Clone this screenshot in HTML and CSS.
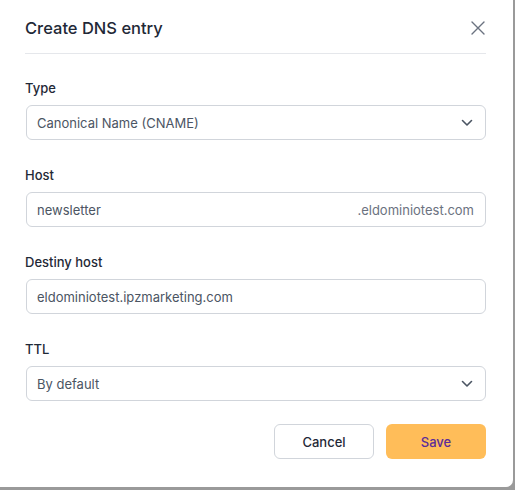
FILE: index.html
```html
<!DOCTYPE html>
<html>
<head>
<meta charset="utf-8">
<link rel="stylesheet" href="styles.css">
</head>
<body>
<div class="modal">
  <div class="header">
    <h2 class="title">Create DNS entry</h2>
    <button class="close" aria-label="Close">
      <svg width="14" height="14" viewBox="0 0 14 14"><path d="M1 1L13 13M13 1L1 13" stroke="#6b7280" stroke-width="1.4" stroke-linecap="round"/></svg>
    </button>
  </div>
  <div class="body">
    <div class="field">
      <label class="label">Type</label>
      <div class="control select">
        <span class="value alt">Canonical Name (CNAME)</span>
        <svg class="chev" width="12" height="8" viewBox="0 0 12 8"><path d="M1.5 1.5L6 6L10.5 1.5" fill="none" stroke="#4b5563" stroke-width="1.6" stroke-linecap="round" stroke-linejoin="round"/></svg>
      </div>
    </div>
    <div class="field">
      <label class="label">Host</label>
      <div class="control">
        <span class="value">newsletter</span>
        <span class="suffix">.eldominiotest.com</span>
      </div>
    </div>
    <div class="field">
      <label class="label">Destiny host</label>
      <div class="control">
        <span class="value">eldominiotest.ipzmarketing.com</span>
      </div>
    </div>
    <div class="field field-last">
      <label class="label">TTL</label>
      <div class="control select">
        <span class="value alt">By default</span>
        <svg class="chev" width="12" height="8" viewBox="0 0 12 8"><path d="M1.5 1.5L6 6L10.5 1.5" fill="none" stroke="#4b5563" stroke-width="1.6" stroke-linecap="round" stroke-linejoin="round"/></svg>
      </div>
    </div>
    <div class="actions">
      <button class="btn cancel">Cancel</button>
      <button class="btn save">Save</button>
    </div>
  </div>
</div>
</body>
</html>
```

FILE: styles.css
```css
html, body {
  margin: 0;
  padding: 0;
  background: #9a9a9a;
  height: 100%;
}
body {
  font-family: Inter, "Noto Sans", sans-serif;
  color: #1f2937;
}
.modal {
  width: 513px;
  height: 487px;
  background: #ffffff;
  border-radius: 0 0 7px 0;
  box-sizing: border-box;
  padding: 0 27px 0 25px;
}
.header {
  height: 54px;
  border-bottom: 1px solid #e5e7eb;
  display: flex;
  align-items: center;
  justify-content: space-between;
  box-sizing: border-box;
  padding-top: 2px;
}
.title {
  margin: 0;
  font-size: 16.5px;
  font-weight: 500;
  color: #1f2937;
  letter-spacing: 0;
}
.close {
  border: 0;
  background: none;
  padding: 0;
  margin-right: 1px;
  width: 14px;
  height: 14px;
  display: flex;
}
.body {
  padding-top: 25px;
}
.field {
  margin-bottom: 26px;
}
.field-last {
  margin-bottom: 23px;
}
.label {
  display: block;
  font-size: 13px;
  font-weight: 500;
  line-height: 18px;
  color: #1f2937;
  margin-bottom: 8px;
}
.control {
  height: 35px;
  border: 1px solid #d1d5db;
  border-radius: 6px;
  box-sizing: border-box;
  display: flex;
  align-items: center;
  justify-content: space-between;
  padding: 0 11px 0 10px;
  margin-left: 1px;
}
.value {
  font-size: 13px;
  color: #4b5563;
}
.suffix {
  font-size: 13px;
  color: #6b7280;
}
.chev {
  margin-right: 1px;
}
.actions {
  display: flex;
  justify-content: flex-end;
  gap: 12px;
}
.btn {
  width: 100px;
  height: 35px;
  border-radius: 6px;
  font-family: Inter, "Noto Sans", sans-serif;
  font-size: 13px;
  font-weight: 500;
  box-sizing: border-box;
}
.cancel {
  background: #ffffff;
  border: 1px solid #d1d5db;
  color: #1f2937;
}
.save {
  background: #ffbd59;
  border: 0;
  color: #5b2c9a;
}
```
